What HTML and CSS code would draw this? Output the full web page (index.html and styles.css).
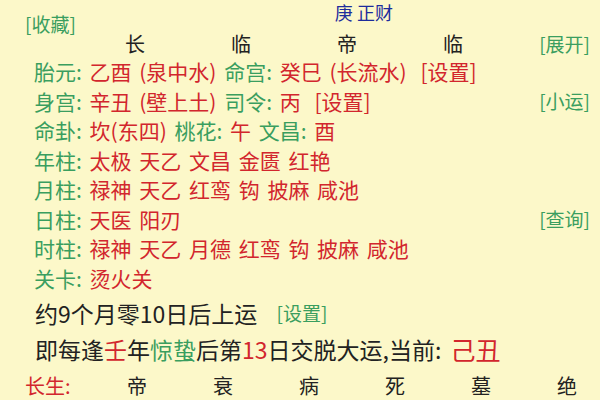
FILE: index.html
```html
<!DOCTYPE html>
<html lang="zh">
<head>
<meta charset="utf-8">
<link rel="stylesheet" href="styles.css">
</head>
<body>
<div class="page">
  <div class="top1">
    <span class="link fav">[收藏]</span>
    <span class="title">庚 正财</span>
  </div>
  <div class="top2">
    <div class="cols">
      <span>长</span><span>临</span><span>帝</span><span>临</span>
    </div>
    <span class="link">[展开]</span>
  </div>
  <div class="rows">
    <div class="row"><div><span class="g">胎元:</span> <span class="r">乙酉 (泉中水)</span> <span class="g">命宫:</span> <span class="r">癸巳 (长流水)</span> <span class="r set">[设置]</span></div></div>
    <div class="row"><div><span class="g">身宫:</span> <span class="r">辛丑 (壁上土)</span> <span class="g">司令:</span> <span class="r">丙</span> <span class="r set">[设置]</span></div><span class="link">[小运]</span></div>
    <div class="row"><div><span class="g">命卦:</span> <span class="r">坎(东四)</span> <span class="g">桃花:</span> <span class="r">午</span> <span class="g">文昌:</span> <span class="r">酉</span></div></div>
    <div class="row"><div><span class="g">年柱:</span> <span class="r">太极 天乙 文昌 金匮 红艳</span></div></div>
    <div class="row"><div><span class="g">月柱:</span> <span class="r">禄神 天乙 红鸾 钩 披麻 咸池</span></div></div>
    <div class="row"><div><span class="g">日柱:</span> <span class="r">天医 阳刃</span></div><span class="link">[查询]</span></div>
    <div class="row"><div><span class="g">时柱:</span> <span class="r">禄神 天乙 月德 红鸾 钩 披麻 咸池</span></div></div>
    <div class="row"><div><span class="g">关卡:</span> <span class="r">烫火关</span></div></div>
  </div>
  <div class="big first">约9个月零10日后上运 <span class="link small">[设置]</span></div>
  <div class="big">即每逢<span class="r">壬</span>年<span class="g">惊蛰</span>后第<span class="r">13</span>日交脱大运,当前: <span class="r cur">己丑</span></div>
  <div class="stages">
    <span class="r lbl">长生:</span>
    <div class="stage-list"><span>帝</span><span>衰</span><span>病</span><span>死</span><span>墓</span><span>绝</span></div>
  </div>
</div>
</body>
</html>
```
FILE: styles.css
```css
html, body {
  margin: 0;
  padding: 0;
  background: #fcf8c9;
  overflow: hidden;
}
body {
  font-family: "Noto Sans CJK SC", "Noto Sans", sans-serif;
  color: #222;
  width: 600px;
  height: 400px;
}
.page {
  padding: 0 10px 0 0;
}
.g { color: #3a9e5f; }
.r { color: #d2262d; }
.link { color: #3a9e5f; font-size: 19px; line-height: 20px; word-spacing: normal; }
.top1 {
  display: flex;
  align-items: flex-start;
  height: 30px;
}
.fav {
  margin-left: 25px;
  margin-top: 14px;
}
.title {
  color: #1d2c9c;
  font-size: 18px;
  line-height: 20px;
  margin-top: 2px;
  margin-left: 259px;
}
.top2 {
  display: flex;
  align-items: center;
  justify-content: space-between;
  height: 26px;
  margin-top: 1px;
}
.cols {
  display: grid;
  grid-template-columns: repeat(4, 106px);
  margin-left: 82px;
  font-size: 20px;
  line-height: 26px;
}
.cols span { text-align: center; }
.row {
  display: flex;
  justify-content: space-between;
  align-items: center;
  height: 29.5px;
  padding-left: 34px;
  font-size: 21px;
  line-height: 29px;
  word-spacing: 3px;
  white-space: nowrap;
}
.set { margin-left: 6px; }
.big {
  display: flex;
  align-items: center;
  white-space: pre;
  height: 36px;
  padding-left: 35px;
  font-size: 23px;
}
.big.first { margin-top: 2px; }
.small { margin-left: 14px; font-size: 19px; }
.cur { font-size: 25px; margin-left: 4px; }
.stages {
  display: flex;
  align-items: center;
  height: 36px;
  font-size: 20px;
}
.lbl { margin-left: 25px; width: 102px; }
.stage-list {
  display: flex;
  gap: 66px;
}
```
